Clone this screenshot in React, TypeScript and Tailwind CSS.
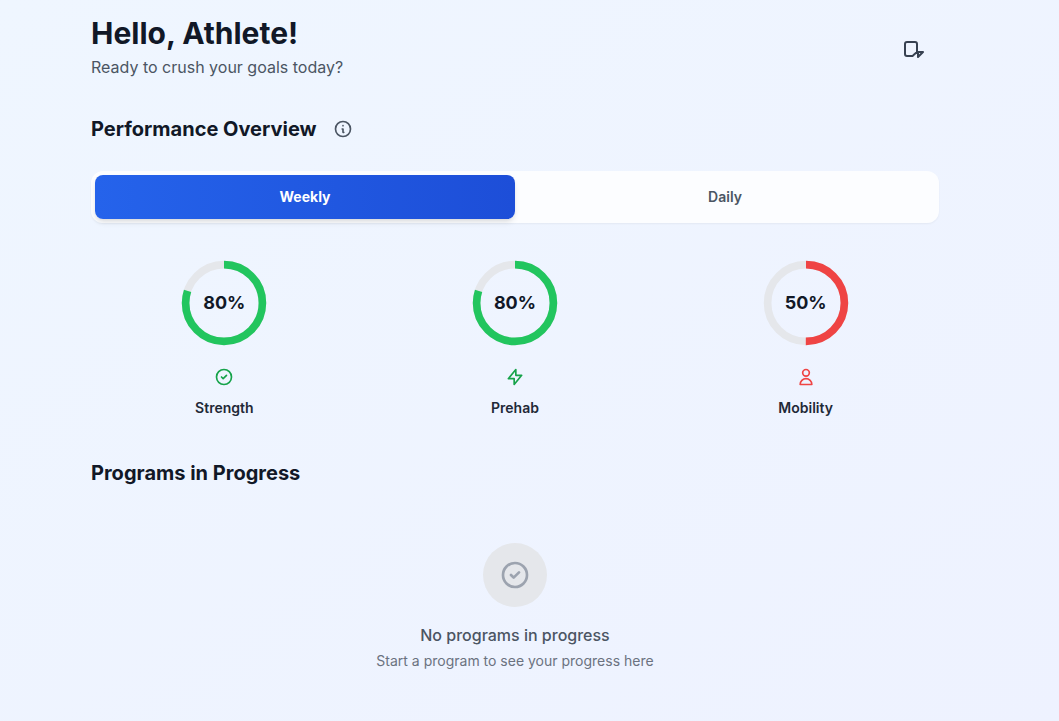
import { useState } from "react";

type IconProps = { path: string; className: string };

function Icon({ path, className }: IconProps) {
  return (
    <svg
      className={className}
      viewBox="0 0 24 24"
      fill="none"
      stroke="currentColor"
      strokeWidth={2}
      strokeLinecap="round"
      strokeLinejoin="round"
      aria-hidden="true"
    >
      <path d={path} />
    </svg>
  );
}

const icons = {
  info: "M13 16h-1v-4h-1m1-4h.01M21 12a9 9 0 11-18 0 9 9 0 0118 0z",
  check: "M9 12l2 2 4-4m6 2a9 9 0 11-18 0 9 9 0 0118 0z",
  bolt: "M13 10V3L4 14h7v7l9-11h-7z",
  user: "M16 7a4 4 0 11-8 0 4 4 0 018 0zM12 14a7 7 0 00-7 7h14a7 7 0 00-7-7z",
  note: "M15 17h5l-5 5v-5zM9 21H4a2 2 0 01-2-2V9a2 2 0 012-2h8a2 2 0 012 2v8l-4 3.6A2 2 0 019 21z",
};

const metrics = [
  { label: "Strength", value: 80, icon: icons.check, ring: "text-[#22c55e]", tint: "text-[#16a34a]" },
  { label: "Prehab", value: 80, icon: icons.bolt, ring: "text-[#22c55e]", tint: "text-[#16a34a]" },
  { label: "Mobility", value: 50, icon: icons.user, ring: "text-[#ef4444]", tint: "text-[#ef4444]" },
];

function Ring({ value, color }: { value: number; color: string }) {
  const length = 2 * Math.PI * 40;
  return (
    <div className="grid size-24 place-items-center">
      <svg className={`col-start-1 row-start-1 size-24 -rotate-90 ${color}`} viewBox="0 0 100 100" fill="none" strokeWidth={8} aria-hidden="true">
        <circle cx="50" cy="50" r="40" stroke="#e5e7eb" />
        <circle cx="50" cy="50" r="40" stroke="currentColor" strokeDasharray={length} strokeDashoffset={length * (1 - value / 100)} />
      </svg>
      <span className="col-start-1 row-start-1 text-lg font-bold text-[#111827]">{value}%</span>
    </div>
  );
}

export default function App() {
  const [period, setPeriod] = useState("Weekly");
  return (
    <div className="min-h-screen bg-linear-to-br from-[#eff6ff] to-[#eef2ff] pr-[29px] font-['Inter',sans-serif] text-[#111827]">
      <main className="mx-auto max-w-4xl px-6 pt-[15px] pb-12">
        <header className="mb-8 flex items-center justify-between">
          <div>
            <h1 className="text-3xl font-bold">Hello, Athlete!</h1>
            <p className="mt-1 text-base text-[#4b5563]">Ready to crush your goals today?</p>
          </div>
          <button type="button" aria-label="Notifications" className="rounded-xl p-3 text-[#374151]">
            <Icon path={icons.note} className="size-6" />
          </button>
        </header>

        <section>
          <div className="mb-6 flex items-center gap-2">
            <h2 className="text-xl font-bold">Performance Overview</h2>
            <button type="button" aria-label="About performance" className="rounded-lg p-2 text-[#4b5563]">
              <Icon path={icons.info} className="size-5" />
            </button>
          </div>

          <div className="mb-8 flex rounded-xl bg-white/80 p-1 shadow-[0_1px_2px_rgba(0,0,0,0.05)]">
            {["Weekly", "Daily"].map((name) => (
              <button
                key={name}
                type="button"
                aria-pressed={period === name}
                onClick={() => setPeriod(name)}
                className={
                  period === name
                    ? "flex-1 rounded-lg bg-linear-to-r from-[#2563eb] to-[#1d4ed8] py-3 text-sm font-bold text-white shadow-md"
                    : "flex-1 rounded-lg py-3 text-sm font-semibold text-[#4b5563]"
                }
              >
                {name}
              </button>
            ))}
          </div>

          <div className="grid grid-cols-3 gap-6">
            {metrics.map((m) => (
              <div key={m.label} className="flex flex-col items-center">
                <Ring value={m.value} color={m.ring} />
                <Icon path={m.icon} className={`mt-4 size-5 ${m.tint}`} />
                <p className="mt-[11px] text-sm font-semibold text-[#1f2937]">{m.label}</p>
              </div>
            ))}
          </div>
        </section>

        <section className="mt-[41px]">
          <h2 className="mb-6 text-xl font-bold">Programs in Progress</h2>
          <div className="flex flex-col items-center py-8 text-center">
            <div className="mb-4 flex size-16 items-center justify-center rounded-full bg-[#e5e7eb]">
              <Icon path={icons.check} className="size-8 text-[#9ca3af]" />
            </div>
            <p className="text-base font-medium text-[#4b5563]">No programs in progress</p>
            <p className="mt-1 text-sm text-[#6b7280]">Start a program to see your progress here</p>
          </div>
        </section>
      </main>
    </div>
  );
}
